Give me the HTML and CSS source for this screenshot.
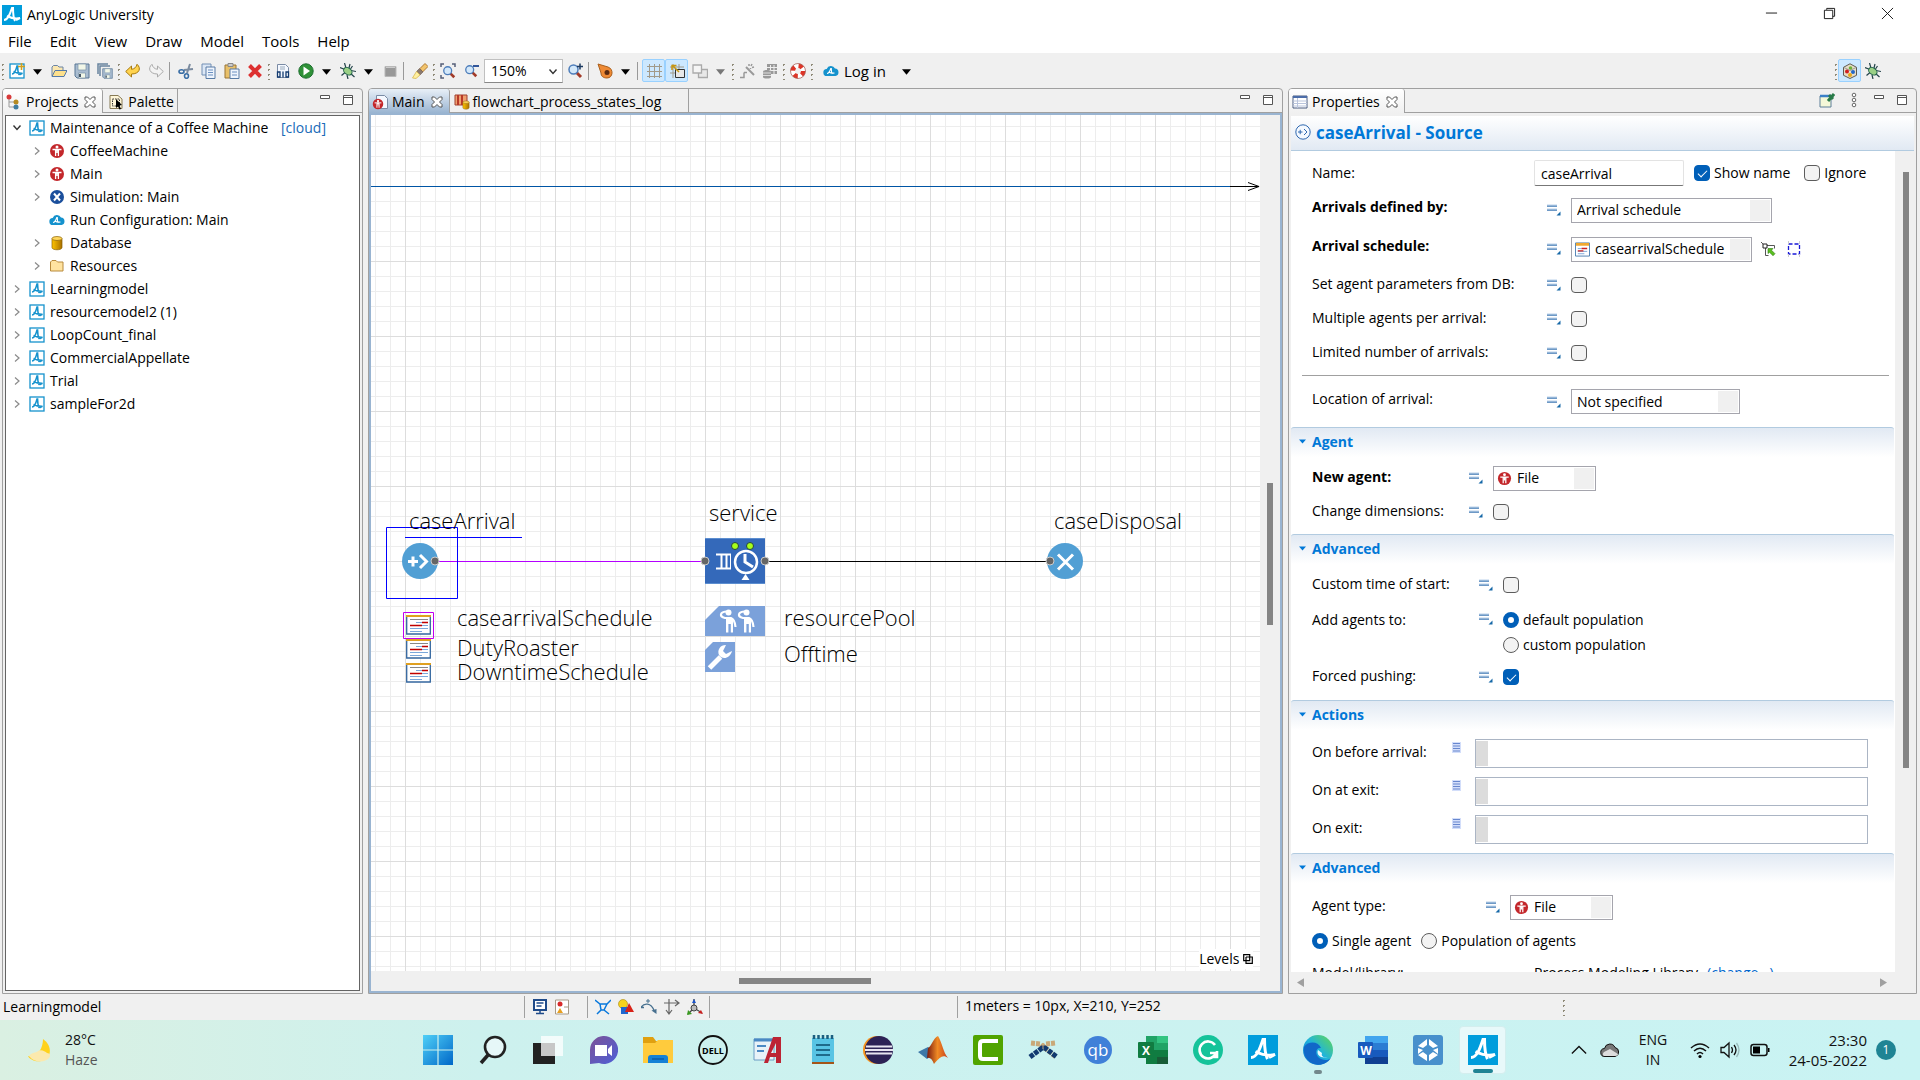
FILE: index.html
```html
<!DOCTYPE html>
<html lang="en">
<head>
  <meta charset="UTF-8">
  <meta name="viewport" content="width=device-width, initial-scale=1.0">
  <title>AnyLogic University</title>
  <link rel="stylesheet" href="styles.css">
</head>
<body>
  <!-- shared icons -->
  <svg class="defs" aria-hidden="true">
    <defs>
      <linearGradient id="gWin" x1="0" y1="0" x2="1" y2="1"><stop offset="0" stop-color="#4fd0f7"/><stop offset="1" stop-color="#0067c8"/></linearGradient>
      <linearGradient id="gEdge" x1="0" y1="1" x2="1" y2="0"><stop offset="0" stop-color="#0a6cd0"/><stop offset=".5" stop-color="#1fb4dc"/><stop offset="1" stop-color="#64d850"/></linearGradient>
      <linearGradient id="gChat" x1="0" y1="0" x2="1" y2="1"><stop offset="0" stop-color="#7d5296"/><stop offset="1" stop-color="#4d5fd8"/></linearGradient>
      <linearGradient id="gGold" x1="0" x2="1"><stop offset="0" stop-color="#ffc400"/><stop offset="1" stop-color="#a87000"/></linearGradient>
      <linearGradient id="gMat" x1="0" x2="1"><stop offset="0" stop-color="#7a1a10"/><stop offset=".5" stop-color="#f08a24"/><stop offset="1" stop-color="#c8401c"/></linearGradient>
    </defs>
    <symbol id="logo" viewBox="0 0 20 20"><rect width="20" height="20" fill="#009ddc"/><path d="M2 15c4 0 6-6 8-12l1 0c0 5 0 9 2 13M5 11c4 2 9 3 13 2l-4 2" fill="none" stroke="#fff" stroke-width="2"/></symbol>
    <symbol id="model" viewBox="0 0 16 16"><rect x="1" y="1" width="14" height="14" fill="#fff" stroke="#1592cd" stroke-width="1.3"/><path d="M3 11c3 0 4-4 5-8h.6c0 4 0 6 1.600 9M4.500 8.500c3 1.500 5 2 9 1.800l-3 1.500" fill="none" stroke="#1592cd" stroke-width="1.500"/></symbol>
    <symbol id="agent" viewBox="0 0 16 16"><circle cx="8" cy="8" r="7" fill="#c3272b"/><circle cx="8" cy="4" r="1.500" fill="#fff"/><path d="M3.500 6.500h9M8 6v4M6.600 13V7h2.800v6M8 10" stroke="#fff" stroke-width="1.300" fill="none"/></symbol>
    <symbol id="sim" viewBox="0 0 16 16"><circle cx="8" cy="8" r="7" fill="#1b4f9c"/><path d="M5 4.500l6 7M11 4.500l-6 7" stroke="#fff" stroke-width="2"/></symbol>
    <symbol id="cloud" viewBox="0 0 16 16"><path d="M4 13a3.500 3.500 0 0 1-.3-7A4.500 4.500 0 0 1 12 5.500a3.800 3.800 0 0 1 .5 7.500z" fill="#1592cd"/><path d="M4 10.500c2 0 3-2.500 3.800-5l.5 0c0 2.500 0 4 1 5.500M5.500 9c2 1 4 1.300 6 1" fill="none" stroke="#fff" stroke-width="1.100"/></symbol>
    <symbol id="db" viewBox="0 0 16 16"><path d="M3 3.500v9c0 3 10 3 10 0v-9z" fill="url(#gGold)" stroke="#8a6000" stroke-width=".7"/><ellipse cx="8" cy="3.500" rx="5" ry="2" fill="#ffd75e" stroke="#8a6000" stroke-width=".7"/></symbol>
    <symbol id="folder" viewBox="0 0 16 16"><path d="M1.500 13V4l1.500-1.500h4L8.500 4H14v9z" fill="#ffe3a0" stroke="#b88a3c"/></symbol>
    <symbol id="sched" viewBox="0 0 25 20"><path d="M.7 1h23.600v18H.7z" fill="#fff" stroke="#33669f" stroke-width="1.300"/><path d="M0 1h25" stroke="#e0a020" stroke-width="2"/><path d="M4 4.500h18" stroke="#888"/><path d="M10 7.500h6M4 13.500h18M4 16.500h12M16 10.500h6" stroke="#7ba7da"/><path d="M16 7.500h6M4 10.500h12" stroke="#c00000" stroke-width="1.300"/></symbol>
    <symbol id="eq" viewBox="0 0 14 12"><path d="M0 2h10M0 6h10" stroke="#3f78b4" stroke-width="1.300"/><path d="M0 1h10M0 5h10" stroke="#bcd3ea"/><path d="M13.500 7.500v4h-4z" fill="#1769a8"/></symbol>
    <symbol id="code" viewBox="0 0 9 11"><path d="M0 0h9v11H0z" fill="#d3defa"/><path d="M1 1.500h7M1 4h7M1 6.500h7M1 9h7" stroke="#6887ce"/></symbol>
    <symbol id="close" viewBox="0 0 12 12"><path d="M1 1h2.500L6 3.500 8.500 1H11v2.500L8.500 6 11 8.500V11H8.500L6 8.500 3.500 11H1V8.500L3.500 6 1 3.500z" fill="#fff" stroke="#555"/></symbol>
    <symbol id="min" viewBox="0 0 12 12"><path d="M1.500 1.500h9v3h-9z" fill="#fff" stroke="#555"/></symbol>
    <symbol id="max" viewBox="0 0 12 12"><path d="M1.500 1.500h9v9h-9zM1.500 3.500h9" fill="#fff" stroke="#555"/></symbol>
    <symbol id="right" viewBox="0 0 8 10"><path d="M2 1.500L6 5 2 8.500" fill="none" stroke="#8a8a8a" stroke-width="1.200"/></symbol>
    <symbol id="down" viewBox="0 0 10 8"><path d="M1.500 1.500L5 5.500l3.500-4" fill="none" stroke="#333" stroke-width="1.400"/></symbol>
    <symbol id="tri" viewBox="0 0 10 6"><path d="M0 0h10L5 6z"/></symbol>
    <symbol id="bug" viewBox="0 0 16 16"><path d="M0 4.500l5 2M4.500 0l1.500 5M10 1l-1 4M16 8.500l-5-1M14.500 14L10 10M8 16l-1-4M1.500 12.500L5 9.500M12.500 3L10.500 6" stroke="#24434a" stroke-width="1.200"/><ellipse cx="8" cy="8.300" rx="4.600" ry="3.200" transform="rotate(35 8 8)" fill="#9ad086" stroke="#20604a"/></symbol>
    <symbol id="lens" viewBox="0 0 16 16"><path d="M9.500 9.500l4.500 4.500" stroke="#a23a28" stroke-width="3"/><circle cx="6.500" cy="6.500" r="4.500" fill="#d3e8fa" stroke="#4d7dba" stroke-width="1.500"/></symbol>
    <symbol id="disk" viewBox="0 0 16 16"><path d="M1 1h14v14H3l-2-2z" fill="#a9bcd0" stroke="#587694"/><path d="M4 1h8v6H4zM4.500 10h7v5h-7z" fill="#f2f7e8" stroke="#7890a8" stroke-width=".7"/><path d="M6 11v3" stroke="#456" stroke-width="2"/></symbol>
    <symbol id="page" viewBox="0 0 16 16"><path d="M2.500 1.500h8l3 3v10h-11z" fill="#f4f8ff" stroke="#7a8ba5"/></symbol>
  </svg>

  <header class="titlebar">
    <svg class="app-icon"><use href="#logo"/></svg>
    <h1>AnyLogic University</h1>
    <div class="window-buttons">
      <button aria-label="Minimize"><svg viewBox="0 0 14 14"><path d="M1 6.500h12"/></svg></button>
      <button aria-label="Restore"><svg viewBox="0 0 14 14"><path d="M1.500 3.500h9v9h-9zM4 3V1.500h8.500V10h-2"/></svg></button>
      <button aria-label="Close"><svg viewBox="0 0 14 14"><path d="M1 1l12 12M13 1L1 13"/></svg></button>
    </div>
  </header>
  <nav class="menubar">
    <button>File</button><button>Edit</button><button>View</button><button>Draw</button><button>Model</button><button>Tools</button><button>Help</button>
  </nav>

  <div class="toolbar">
    <span class="grip"></span>
    <button class="tool" aria-label="New"><svg><use href="#model"/><path d="M12.500 0v7M9 3.500h7" stroke="#d0a020" stroke-width="1.600"/></svg></button>
    <button class="drop" aria-label="New menu"><svg><use href="#tri"/></svg></button>
    <button class="tool" aria-label="Open"><svg viewBox="0 0 16 16"><path d="M1 13V4l1.500-1.500h4L8 4h4v3" fill="#fbe7b0" stroke="#6b84a5"/><path d="M1 13.500l3-6h12l-3 6z" fill="#fde08c" stroke="#557aa8"/></svg></button>
    <button class="tool" aria-label="Save"><svg><use href="#disk"/></svg></button>
    <button class="tool" aria-label="Save all"><svg viewBox="0 0 16 16"><path d="M1 11V1h10M3 13V3h10" fill="none" stroke="#68849f" stroke-width="1.500"/><use href="#disk" x="5" y="5" width="11" height="11"/></svg></button>
    <span class="grip"></span>
    <button class="tool" aria-label="Undo"><svg viewBox="0 0 16 16"><path d="M.7 8.500L6.500 3v3.300C9.500 6 11.500 4 12 1.300 16.500 5 14.500 11 6.500 11v3z" fill="#ffd34e" stroke="#a77a10"/></svg></button>
    <button class="tool" aria-label="Redo"><svg viewBox="0 0 16 16"><path d="M15.300 8.500L9.500 3v3.300C6.500 6 4.500 4 4 1.300-.5 5 1.500 11 9.500 11v3z" fill="#f3f3f3" stroke="#aaa"/></svg></button>
    <span class="sep"></span>
    <button class="tool" aria-label="Cut"><svg viewBox="0 0 16 16"><path d="M9 10L12 1M6 7l9-1" stroke="#7c8ca0" stroke-width="2"/><ellipse cx="3.500" cy="8.500" rx="2.500" ry="1.800" fill="none" stroke="#3a6ea5" stroke-width="1.600"/><ellipse cx="8.500" cy="13" rx="2" ry="2.300" fill="none" stroke="#3a6ea5" stroke-width="1.600"/></svg></button>
    <button class="tool" aria-label="Copy"><svg viewBox="0 0 16 16"><path d="M1 1h9v11H1z" fill="#dce7f5" stroke="#7290b5"/><path d="M5 4h9v11.500H5z" fill="#eef4fc" stroke="#587ba5"/><path d="M7 7h5M7 9.500h5M7 12h5" stroke="#6a8fc0"/></svg></button>
    <button class="tool" aria-label="Paste"><svg viewBox="0 0 16 16"><path d="M1 2h11v13H1z" fill="#e8c06a" stroke="#9a7434"/><path d="M4 .5h5v3H4z" fill="#ccc" stroke="#888"/><path d="M6 6h9v9.500H6z" fill="#eef4fc" stroke="#587ba5"/><path d="M8 9h5M8 12h5" stroke="#6a8fc0"/></svg></button>
    <button class="tool" aria-label="Delete"><svg viewBox="0 0 16 16"><path d="M2.500 2.500l11 11M13.500 2.500l-11 11" stroke="#dd3030" stroke-width="4"/></svg></button>
    <span class="grip"></span>
    <button class="tool" aria-label="Build"><svg viewBox="0 0 16 16"><use href="#page"/><path d="M5 4h5M5 6h5" stroke="#9ab"/><path d="M2.500 9h2.500v5H2.500zM8 8.500v6M11 9h2.500v5H11z" fill="#fff" stroke="#123a70" stroke-width="1.300"/></svg></button>
    <button class="tool" aria-label="Run"><svg viewBox="0 0 16 16"><circle cx="8" cy="8" r="7.200" fill="#2f9137" stroke="#1d6f30"/><path d="M5.500 3.500l6.500 4.500-6.500 4.500z" fill="#fff"/></svg></button>
    <button class="drop" aria-label="Run menu"><svg><use href="#tri"/></svg></button>
    <button class="tool" aria-label="Debug"><svg><use href="#bug"/></svg></button>
    <button class="drop" aria-label="Debug menu"><svg><use href="#tri"/></svg></button>
    <button class="tool" aria-label="Stop"><svg viewBox="0 0 16 16"><path d="M3 3.500h11v10H3z" fill="#999" stroke="#b8b8b8"/><path d="M4 4.500h9" stroke="#ccc"/></svg></button>
    <span class="sep"></span>
    <button class="tool" aria-label="Search"><svg viewBox="0 0 16 16"><path d="M8 5.500L13 .5 16 3.500 10.500 9z" fill="#f2c46c" stroke="#b07830"/><path d="M7.500 5.500l3.500 3.500L8 12 4.500 8.500z" fill="#8b7a70" stroke="#6b5a50" stroke-width=".6"/><path d="M4.500 8.500L8 12l-4 3.500L.5 15z" fill="#fff0a0" stroke="#d8b850" stroke-width=".8"/></svg></button>
    <span class="grip"></span>
    <button class="tool" aria-label="Zoom to fit"><svg viewBox="0 0 16 16"><path d="M1 4V1h3M12 1h3v3M1 12v3h3" fill="none" stroke="#555f78" stroke-width="1.500"/><use href="#lens" x="2" y="2" width="14" height="14"/></svg></button>
    <button class="tool" aria-label="Zoom out"><svg viewBox="0 0 16 16"><use href="#lens" x="1" y="1" width="14" height="14"/><path d="M10 3h6" stroke="#1c4590" stroke-width="1.800"/></svg></button>
    <span class="zoom-box">
      <select aria-label="Zoom"><option>150%</option></select>
      <svg class="chevron"><use href="#down"/></svg>
    </span>
    <button class="tool" aria-label="Zoom in"><svg viewBox="0 0 16 16"><use href="#lens"/><path d="M10 3.500h6M13 .5v6" stroke="#1c3a60" stroke-width="1.500"/></svg></button>
    <span class="sep"></span>
    <button class="tool" aria-label="Camera"><svg viewBox="0 0 16 16"><path d="M1 1l10 3c6 2 5 11-1 11-4 0-6-2-6-5z" fill="#ef8a35" stroke="#a9601e"/><circle cx="10" cy="9.500" r="2.500" fill="#5a2a10"/></svg></button>
    <button class="drop" aria-label="Camera menu"><svg><use href="#tri"/></svg></button>
    <span class="sep"></span>
    <button class="tool on" aria-label="Grid"><svg viewBox="0 0 16 16"><path d="M3.500 1v14M8.500 1v14M13.500 1v14M1 3.500h15M1 8.500h15M1 13.500h15" stroke="#a19a8a"/></svg></button>
    <button class="tool on" aria-label="Snap to grid"><svg viewBox="0 0 16 16"><path d="M4 1v14M1 4h14M10 1v5M1 10h5" stroke="#a19a8a"/><path d="M6.500 6.500h9v8h-9z" fill="#e8e8e8" stroke="#333"/><path d="M10 9L4 3m-1 4V2.500h4.500" fill="none" stroke="#c79610" stroke-width="1.500"/></svg></button>
    <button class="tool" aria-label="Bring to front"><svg viewBox="0 0 16 16"><path d="M6.500 6.500h9v8h-9z" fill="#e8e8e8" stroke="#aaa" stroke-width="1.300"/><path d="M1 2h8.500v8H1z" fill="#f5f5f5" stroke="#aaa" stroke-width="1.300"/></svg></button>
    <button class="drop grey" aria-label="Order menu"><svg><use href="#tri"/></svg></button>
    <span class="grip"></span>
    <button class="tool" aria-label="Wizard"><svg viewBox="0 0 16 16"><path d="M7 4l8 8" stroke="#999" stroke-width="2"/><path d="M1 14.500h4V9.500M5 9.500h3M10 1v2M13 1l-1 2M15 4l-2 .5M11.500 5v1" fill="none" stroke="#999" stroke-width="1.500"/></svg></button>
    <button class="tool" aria-label="Database"><svg viewBox="0 0 16 16"><path d="M5 1h10v10H5z" fill="#999"/><path d="M5 4.500h10M5 7.500h10M8.500 2v9M12 2v9" stroke="#eee"/><path d="M1 8.500c0-2 8-2 8 0V14c0 2-8 2-8 0z" fill="#999"/><path d="M1 10h8M1 12.500h8" stroke="#ddd"/></svg></button>
    <span class="grip"></span>
    <button class="tool" aria-label="Help"><svg viewBox="0 0 16 16"><circle cx="8" cy="8" r="5.200" fill="none" stroke="#fff" stroke-width="4.500"/><circle cx="8" cy="8" r="5.200" fill="none" stroke="#dd3528" stroke-width="4.500" stroke-dasharray="4.100 4.060"/><circle cx="8" cy="8" r="7.500" fill="none" stroke="#a05048" stroke-width=".7"/></svg></button>
    <span class="grip"></span>
    <button class="login"><svg><use href="#cloud"/></svg>Log in</button>
    <button class="drop" aria-label="Account menu"><svg><use href="#tri"/></svg></button>
    <div class="perspectives">
      <span class="grip"></span>
      <button class="tool on" aria-label="AnyLogic perspective"><svg viewBox="0 0 16 16"><path d="M8 .8l6.500 3.500v8L8 15.500l-6.500-3.200v-8z" fill="#e6ddc8" stroke="#5f5a50"/><path d="M2 4.500l6 3 6-3" stroke="#999" fill="none"/><circle cx="5" cy="8.500" r="2" fill="#d02020"/><circle cx="11" cy="9" r="2" fill="#2468c8"/><circle cx="8" cy="12" r="2" fill="#e8a818"/><circle cx="8.500" cy="5" r="1.800" fill="#70b038"/></svg></button>
      <button class="tool" aria-label="Debug perspective"><svg><use href="#bug"/></svg></button>
    </div>
  </div>

  <main class="workbench">
    <section class="pane projects">
      <div class="tabs">
        <button class="tab active"><svg viewBox="0 0 16 16"><path d="M3 4v9h5M3 8h5" fill="none" stroke="#999"/><circle cx="3" cy="3" r="2.500" fill="#d83a3a"/><circle cx="10" cy="8" r="2.500" fill="#b58a20"/><circle cx="10" cy="13" r="2.500" fill="#3f7ca0"/></svg>Projects<svg class="x"><use href="#close"/></svg></button>
        <button class="tab"><svg viewBox="0 0 16 16"><path d="M2 1.500h8l4 3.500v9.500H2z" fill="#fff6d8" stroke="#877a55"/><path d="M4.500 5h7v7h-7z" fill="none" stroke="#333" stroke-dasharray="1.500 1"/><path d="M8 5l6 6-2.500.5L13 15l-1.500.5L10 12.500 8 14z"/></svg>Palette</button>
        <div class="pane-tools"><button aria-label="Minimize"><svg><use href="#min"/></svg></button><button aria-label="Maximize"><svg><use href="#max"/></svg></button></div>
      </div>
      <div class="tree-box">
        <ul class="tree">
          <li><div class="node"><svg class="tw open"><use href="#down"/></svg><svg><use href="#model"/></svg>Maintenance of a Coffee Machine <span class="cloud">[cloud]</span></div>
            <ul>
              <li><div class="node"><svg class="tw"><use href="#right"/></svg><svg><use href="#agent"/></svg>CoffeeMachine</div></li>
              <li><div class="node"><svg class="tw"><use href="#right"/></svg><svg><use href="#agent"/></svg>Main</div></li>
              <li><div class="node"><svg class="tw"><use href="#right"/></svg><svg><use href="#sim"/></svg>Simulation: Main</div></li>
              <li><div class="node"><svg class="tw"></svg><svg><use href="#cloud"/></svg>Run Configuration: Main</div></li>
              <li><div class="node"><svg class="tw"><use href="#right"/></svg><svg><use href="#db"/></svg>Database</div></li>
              <li><div class="node"><svg class="tw"><use href="#right"/></svg><svg><use href="#folder"/></svg>Resources</div></li>
            </ul>
          </li>
          <li><div class="node"><svg class="tw"><use href="#right"/></svg><svg><use href="#model"/></svg>Learningmodel</div></li>
          <li><div class="node"><svg class="tw"><use href="#right"/></svg><svg><use href="#model"/></svg>resourcemodel2 (1)</div></li>
          <li><div class="node"><svg class="tw"><use href="#right"/></svg><svg><use href="#model"/></svg>LoopCount_final</div></li>
          <li><div class="node"><svg class="tw"><use href="#right"/></svg><svg><use href="#model"/></svg>CommercialAppellate</div></li>
          <li><div class="node"><svg class="tw"><use href="#right"/></svg><svg><use href="#model"/></svg>Trial</div></li>
          <li><div class="node"><svg class="tw"><use href="#right"/></svg><svg><use href="#model"/></svg>sampleFor2d</div></li>
        </ul>
      </div>
    </section>

    <section class="pane editor">
      <div class="tabs">
        <button class="tab active"><svg viewBox="0 0 16 16"><use href="#page" x="2"/><use href="#agent" y="4" width="12" height="12"/></svg>Main<svg class="x"><use href="#close"/></svg></button>
        <button class="tab log-tab"><svg viewBox="0 0 16 16"><path d="M1 1h12v10H1z" fill="#f0a070" stroke="#a04030"/><path d="M4 1v10M8 1v10" stroke="#b83a28" stroke-width="2"/><use href="#db" x="7" y="6" width="10" height="10"/></svg>flowchart_process_states_log</button>
        <div class="pane-tools"><button aria-label="Minimize"><svg><use href="#min"/></svg></button><button aria-label="Maximize"><svg><use href="#max"/></svg></button></div>
      </div>
      <div class="editor-body">
        <div class="canvas">
          <!-- connectors, ports and block shapes share the canvas coordinates -->
          <svg class="diagram" width="889" height="580" viewBox="371 115 889 580">
            <path d="M371 186.500h860" stroke="#0055a5"/>
            <path d="M1230 186.500h29M1248 182.500l11 4-11 4" fill="none" stroke="#000"/>
            <circle cx="420" cy="561" r="18" fill="#519fd4"/>
            <path d="M408 561.500h10M413 556.500v10" stroke="#fff" stroke-width="3"/><path d="M420 555l6.500 6.500-6.500 6.500" fill="none" stroke="#fff" stroke-width="3"/>
            <path d="M435 561.500h270" stroke="#b400ff"/>
            <path d="M765 561.500h285" stroke="#000"/>
            <path d="M705 538h60v46h-60z" fill="#3469ba"/>
            <path d="M705 538.500h60M705 583.500h60" stroke="#5c8ed0"/>
            <path d="M716 554.500h15M716 568.500h15M721.500 555v13M726.500 555v13" stroke="#fff" stroke-width="2"/><path d="M730.500 554v15" stroke="#fff"/>
            <circle cx="746" cy="562" r="11" fill="none" stroke="#fff" stroke-width="2.500"/><path d="M745 554v8l8 5" fill="none" stroke="#fff" stroke-width="3"/><path d="M745.500 574l4 6h-8z" fill="#fff"/>
            <circle cx="735" cy="546" r="3.500" fill="#a6ff1a" stroke="#244"/><circle cx="750" cy="546" r="3.500" fill="#a6ff1a" stroke="#244"/>
            <circle cx="1065" cy="561" r="18" fill="#519fd4"/><path d="M1058 554.500l15 15M1073 554.500l-15 15" stroke="#fff" stroke-width="3"/>
            <g fill="#666" stroke="#ccc"><circle cx="435" cy="561" r="4"/><circle cx="705" cy="561" r="4"/><circle cx="765" cy="561" r="4"/><circle cx="1050" cy="561" r="4"/></g>
            <path d="M405 537.500h117" stroke="#00f"/><path d="M386.500 527.500h71v71h-71z" fill="none" stroke="#00f"/>
            <use href="#sched" x="406" y="615" width="25" height="20"/><use href="#sched" x="406" y="639" width="25" height="20"/><use href="#sched" x="406" y="663" width="25" height="20"/>
            <path d="M403.500 612.500h30v26h-30z" fill="none" stroke="#c000f0"/>
            <path d="M719 606h46v30h-60v-16z" fill="#7ba1da"/>
            <g id="worker"><circle cx="728.500" cy="612.500" r="3" fill="#fff"/><path d="M726 611.500c-6 .5-7 5-1 6.500h6c3 1 4 4 4.500 9" fill="none" stroke="#fff" stroke-width="2.200"/><path d="M726 618h7v14.500h-2.200V624h-2.400v8.500H726z" fill="#fff"/></g>
            <use href="#worker" x="18"/>
            <path d="M713 642h22v30h-30v-22z" fill="#7ba1da"/><path d="M709.500 668l11-11" stroke="#fff" stroke-width="5"/><path d="M726 645c-6 0-9 5-7 10 3 5 11 4 13-4l-6 3-3-3z" fill="#fff"/>
          </svg>
          <span class="label l-arrival">caseArrival</span>
          <span class="label l-service">service</span>
          <span class="label l-disposal">caseDisposal</span>
          <span class="label l-schedule">casearrivalSchedule</span>
          <span class="label l-duty">DutyRoaster</span>
          <span class="label l-downtime">DowntimeSchedule</span>
          <span class="label l-pool">resourcePool</span>
          <span class="label l-offtime">Offtime</span>
          <button class="levels">Levels <svg viewBox="0 0 10 10"><path d="M3 3V9.300h6.300V3H3M.7.7h6v6h-6z" fill="none" stroke="#000" stroke-width="1.200"/></svg></button>
        </div>
        <div class="vscroll"><span></span></div>
        <div class="hscroll"><span></span></div>
      </div>
    </section>

    <section class="pane properties">
      <div class="tabs">
        <button class="tab active"><svg viewBox="0 0 16 16"><path d="M1 2h14v12H1z" fill="#fff" stroke="#4b5c80"/><path d="M1 3h14" stroke="#4b6ca8" stroke-width="2"/><path d="M5.500 4v10M1 7h14M1 9.500h14M1 12h14" stroke="#b9c4dc"/></svg>Properties<svg class="x"><use href="#close"/></svg></button>
        <div class="pane-tools">
          <button aria-label="Pin"><svg class="wide" viewBox="0 0 16 16"><path d="M1 4h11v11H1z" fill="#f4f8d8" stroke="#5c7f98"/><path d="M1 4h11" stroke="#3b80c8" stroke-width="2.500"/><path d="M9 9l6-7M10 3l4 4" stroke="#287a48" stroke-width="3"/></svg></button>
          <button aria-label="View menu"><svg class="wide" viewBox="0 0 16 16"><g fill="#fff" stroke="#666"><circle cx="8" cy="3" r="1.800"/><circle cx="8" cy="8" r="1.800"/><circle cx="8" cy="13" r="1.800"/></g></svg></button>
          <button aria-label="Minimize"><svg><use href="#min"/></svg></button><button aria-label="Maximize"><svg><use href="#max"/></svg></button>
        </div>
      </div>
      <h2 class="prop-title"><svg viewBox="0 0 16 16"><circle cx="8" cy="8" r="7.200" fill="#f4f9ff" stroke="#2f68b0"/><path d="M3 8h4.500M5.200 5.800v4.400M9 5l3 3-3 3" fill="none" stroke="#2f68b0"/></svg>caseArrival - Source</h2>
      <div class="prop-body">
        <form class="form">
          <div class="rows main-rows">
            <div class="row name-row"><label for="name">Name:</label><input type="text" id="name" value="caseArrival">
              <label class="check"><input type="checkbox" checked>Show name</label><label class="check ignore"><input type="checkbox">Ignore</label></div>
            <div class="row tall"><label class="strong" for="defined">Arrivals defined by:</label><svg class="eq"><use href="#eq"/></svg><select id="defined" class="w-type"><option>Arrival schedule</option></select></div>
            <div class="row mid"><label class="strong" for="schedule">Arrival schedule:</label><svg class="eq"><use href="#eq"/></svg>
              <span class="icon-select w-schedule"><svg viewBox="0 0 16 16"><path d="M.5 1h15v14H.5z" fill="#fff" stroke="#4a7db0"/><path d="M1 2.500h14" stroke="#f0a830" stroke-width="3"/><path d="M3 7h4M3 10h10M3 12.500h7" stroke="#7ba7da"/><path d="M7 7h6M3 9.500h6" stroke="#c22" stroke-width="1.500"/></svg><select id="schedule"><option>casearrivalSchedule</option></select></span>
              <button type="button" class="mini" aria-label="Go to element"><svg viewBox="0 0 16 16"><path d="M1 1l3 3M4.500 4.500h10v3M5.500 5v9.500h3" stroke="#555" fill="none"/><path d="M3 3h4v4H3z" fill="#fff" stroke="#222"/><path d="M8 7.500h5l-1.500 1.700 3.500 3.500-2 2-3.500-3.500L8 12.500z" fill="#5bbf20" stroke="#2b7a10" stroke-width=".6"/></svg></button>
              <button type="button" class="mini" aria-label="Select on canvas"><svg viewBox="0 0 16 16"><path d="M2.500 3h11v10h-11z" fill="none" stroke="#1818d8" stroke-width="1.300" stroke-dasharray="4 2"/><path d="M2.500 0v3M13.500 0v3M2.500 13v3M13.500 13v3" stroke="#ccc"/></svg></button></div>
            <div class="row"><label for="fromdb">Set agent parameters from DB:</label><svg class="eq"><use href="#eq"/></svg><input type="checkbox" id="fromdb"></div>
            <div class="row"><label for="multi">Multiple agents per arrival:</label><svg class="eq"><use href="#eq"/></svg><input type="checkbox" id="multi"></div>
            <div class="row"><label for="limited">Limited number of arrivals:</label><svg class="eq"><use href="#eq"/></svg><input type="checkbox" id="limited"></div>
            <hr>
            <div class="row location"><label for="location">Location of arrival:</label><svg class="eq"><use href="#eq"/></svg><select id="location" class="w-location"><option>Not specified</option></select></div>
          </div>

          <h3><svg><use href="#tri"/></svg>Agent</h3>
          <div class="rows agent-rows">
            <div class="row"><label class="strong" for="agent">New agent:</label><svg class="eq"><use href="#eq"/></svg><span class="icon-select w-agent"><svg><use href="#agent"/></svg><select id="agent"><option>File</option></select></span></div>
            <div class="row"><label for="dims">Change dimensions:</label><svg class="eq"><use href="#eq"/></svg><input type="checkbox" id="dims"></div>
          </div>

          <h3><svg><use href="#tri"/></svg>Advanced</h3>
          <div class="rows adv-rows">
            <div class="row"><label for="custom">Custom time of start:</label><svg class="eq"><use href="#eq"/></svg><input type="checkbox" id="custom"></div>
            <div class="row radios"><span class="caption">Add agents to:</span><svg class="eq"><use href="#eq"/></svg>
              <div><label class="check"><input type="radio" name="pop" checked>default population</label><label class="check"><input type="radio" name="pop">custom population</label></div></div>
            <div class="row"><label for="push">Forced pushing:</label><svg class="eq"><use href="#eq"/></svg><input type="checkbox" id="push" checked></div>
          </div>

          <h3><svg><use href="#tri"/></svg>Actions</h3>
          <div class="rows action-rows">
            <div class="row mid"><label for="before">On before arrival:</label><svg class="code"><use href="#code"/></svg><textarea id="before" rows="1"></textarea></div>
            <div class="row mid"><label for="atexit">On at exit:</label><svg class="code"><use href="#code"/></svg><textarea id="atexit" rows="1"></textarea></div>
            <div class="row mid"><label for="onexit">On exit:</label><svg class="code"><use href="#code"/></svg><textarea id="onexit" rows="1"></textarea></div>
          </div>

          <h3><svg><use href="#tri"/></svg>Advanced</h3>
          <div class="rows type-rows">
            <div class="row mid"><label for="type">Agent type:</label><svg class="eq"><use href="#eq"/></svg><span class="icon-select w-agent"><svg><use href="#agent"/></svg><select id="type"><option>File</option></select></span></div>
            <div class="row single"><label class="check"><input type="radio" name="kind" checked>Single agent</label><label class="check"><input type="radio" name="kind">Population of agents</label></div>
            <div class="row library"><span class="caption">Model/library:</span><span>Process Modeling Library</span><a href="#change">(change...)</a></div>
          </div>
        </form>
        <div class="vscroll"><span></span></div>
        <div class="hscroll arrows"><svg viewBox="0 0 8 10"><path d="M8 0v10L0 5z"/></svg><svg viewBox="0 0 8 10"><path d="M0 0v10l8-5z"/></svg></div>
      </div>
    </section>
  </main>

  <div class="statusbar">
    <span class="status-text">Learningmodel</span>
    <div class="status-group view-tools">
      <svg viewBox="0 0 16 16"><path d="M2 1h12v10H2z" fill="#fff" stroke="#1f4b8a" stroke-width="2"/><path d="M4.500 4h7M4.500 7h5M4 14.500h8M8 11v4" stroke="#1f4b8a" stroke-width="1.500"/></svg>
      <svg viewBox="0 0 16 16"><path d="M1.500 1h13v14h-13z" fill="#fff" stroke="#a59a88"/><circle cx="6" cy="5" r="2.500" fill="#d82a2a"/><path d="M6 9l3 5H3z" fill="#e8a020"/><path d="M10 8h4" stroke="#a59a88"/></svg>
    </div>
    <div class="status-group shape-tools">
      <svg viewBox="0 0 16 16"><path d="M0 1l5 4h7l4-4M5 5l1 6-4 4M12 5l-3 6H6M9 11l5 4" fill="none" stroke="#0878dc" stroke-width="1.500"/></svg>
      <svg viewBox="0 0 16 16"><circle cx="5" cy="5" r="4.500" fill="#f7d31c" stroke="#a8860a" stroke-width=".6"/><path d="M3 8h7v7H3z" fill="#1f67d0"/><path d="M11 4l5 9H7z" fill="#d82218"/></svg>
      <svg viewBox="0 0 16 16"><path d="M0 8.500c3-5 10-5 13 3M0 8.500h3" fill="none" stroke="#47708f" stroke-width="1.300"/><path d="M10.500 11.500l5-1.500v5z" fill="#47708f"/><path d="M5 2h4M7 0v4" stroke="#47708f"/></svg>
      <svg viewBox="0 0 16 16"><path d="M0 4h14M11 1l4 3-4 3M5 0v14M2 11l3 4 3-4" fill="none" stroke="#666" stroke-width="1.200"/></svg>
      <svg viewBox="0 0 16 16"><path d="M7 0v9l8 5M7 9l-6 6" stroke="#444" fill="none" stroke-width="1.300"/><circle cx="7" cy="9" r="3" fill="#bbb" stroke="#444"/><path d="M5 4l2-4 2 4z" fill="#1b53c8"/><path d="M11 14l5 1-2-4z" fill="#c81f1f"/><path d="M1 11l-1 5 5-1z" fill="#3a9a20"/></svg>
    </div>
    <span class="coords">1meters = 10px, X=210, Y=252</span>
    <span class="grip"></span>
  </div>

  <footer class="taskbar">
    <div class="weather">
      <svg viewBox="0 0 26 30"><path d="M16 2c10 7 9 20-2 22C9 25 3 23 1 19c9 2 15-7 15-17z" fill="#ffd21c"/><path d="M2 19c3-4 7-3 9-5 3-2 7 0 9 2 3 0 4 3 2 5-4 5-15 5-20-2z" fill="#fbe9ae"/></svg>
      <div>28°C<br><span>Haze</span></div>
    </div>
    <div class="apps">
      <button aria-label="Start"><svg viewBox="0 0 30 30"><path d="M0 0h14.400v14.400H0zM15.600 0H30v14.400H15.600zM0 15.600h14.400V30H0zM15.600 15.600H30V30H15.600z" fill="url(#gWin)"/></svg></button>
      <button aria-label="Search"><svg viewBox="0 0 30 30"><circle cx="17" cy="12" r="10" fill="#e6f7f8" stroke="#222" stroke-width="2.600"/><path d="M10 20l-7 8" stroke="#222" stroke-width="3.500"/></svg></button>
      <button aria-label="Task view"><svg viewBox="0 0 30 30"><path d="M0 8h22v21H0z" fill="#222"/><path d="M8 1h22v20H8z" fill="#fff" opacity=".75"/></svg></button>
      <button aria-label="Chat"><svg viewBox="0 0 30 30"><path d="M15 1a14 14 0 1 1-4 27l-9 1V15A14 14 0 0 1 15 1z" fill="url(#gChat)"/><path d="M7 10h12v11H7zM20 14l4-4v11l-4-3z" fill="#fff"/></svg></button>
      <button aria-label="Explorer"><svg viewBox="0 0 30 30"><path d="M0 2h10l3 4h17v8H0z" fill="#e0a010"/><path d="M0 8h12l3-3h15v23H0z" fill="#ffcb3d"/><path d="M5 28v-5q0-3 3-3h14q3 0 3 3v5z" fill="#1581d6"/><path d="M9 24h12" stroke="#0b5ca8" stroke-width="1.500"/></svg></button>
      <button aria-label="Dell"><svg viewBox="0 0 30 30"><circle cx="15" cy="15" r="14" fill="none" stroke="#111" stroke-width="1.800"/><text x="15" y="19" text-anchor="middle" class="dell">DELL</text></svg></button>
      <button aria-label="Access"><svg viewBox="0 0 30 30"><path d="M1 4h20v21H1z" fill="#e8f2f8" stroke="#6b9cc4"/><path d="M1 5h20" stroke="#4989c4" stroke-width="3"/><path d="M4 11h9M4 16h7" stroke="#4989c4" stroke-width="2"/><path d="M11 28l9-26h8v26h-5v-6h-6l-2 6zM18 18h5V8z" fill="#bc2434" fill-rule="evenodd"/></svg></button>
      <button aria-label="Notepad"><svg viewBox="0 0 30 30"><path d="M4 3h22v24H4z" fill="#58c4e4"/><path d="M4 27h22v2H4z" fill="#a45518"/><path d="M8 10h14M8 15h14M8 20h14" stroke="#0b4c6c" stroke-width="1.500"/><path d="M6 0v4M10.500 0v4M15 0v4M19.500 0v4M24 0v4" stroke="#1b5f80" stroke-width="2.500"/></svg></button>
      <button aria-label="Eclipse"><svg viewBox="0 0 30 30"><circle cx="14" cy="15" r="14" fill="#f7941e"/><circle cx="16" cy="15" r="14" fill="#2c2255"/><path d="M3 11.500h26M2 15h28M3 18.500h26" stroke="#e8e5f0" stroke-width="1.800"/></svg></button>
      <button aria-label="Matlab"><svg viewBox="0 0 30 30"><path d="M0 17l10-5 7 6-8 6z" fill="#3d78a8"/><path d="M10 13c4-2 5-10 10-12 4 6 5 16 10 22-5-4-8-1-14 6-2-5-4-7-7-6z" fill="url(#gMat)"/></svg></button>
      <button aria-label="Camtasia"><svg viewBox="0 0 30 30"><rect width="30" height="30" rx="2" fill="#51a400"/><path d="M25 6H10q-3 0-3 3v12q0 3 3 3h15" fill="none" stroke="#fff" stroke-width="4"/></svg></button>
      <button aria-label="Arena"><svg viewBox="0 0 30 30"><path d="M3 8l9 1 16 13" fill="none" stroke="#c9a878" stroke-width="5" stroke-dasharray="4 1"/><path d="M27 8l-9 1-5 4" fill="none" stroke="#c9a878" stroke-width="5" stroke-dasharray="4 1"/><path d="M2 22l12-9h3l12 9" fill="none" stroke="#123a70" stroke-width="5" stroke-dasharray="4.500 1"/></svg></button>
      <button aria-label="QuickBooks"><svg viewBox="0 0 30 30"><circle cx="15" cy="15" r="14" fill="#4080d8"/><text x="15" y="21" text-anchor="middle" class="qb">qb</text></svg></button>
      <button aria-label="Excel"><svg viewBox="0 0 30 30"><path d="M8 1h22v28H8z" fill="#21a366"/><path d="M8 15h22v14H8z" fill="#107c41"/><path d="M19 1h11v7H19z" fill="#33c481"/><path d="M19 22h11v7H19z" fill="#185c37"/><rect y="7" width="16" height="16" rx="1" fill="#107c41"/><text x="8" y="20" text-anchor="middle" class="office">X</text></svg></button>
      <button aria-label="Grammarly"><svg viewBox="0 0 30 30"><circle cx="15" cy="15" r="15" fill="#15c39a"/><path d="M22 10a8.500 8.500 0 1 0 1 8h-6M19 22h5v-6" fill="none" stroke="#fff" stroke-width="2.600"/></svg></button>
      <button aria-label="AnyLogic"><svg><use href="#logo"/></svg></button>
      <button class="running" aria-label="Edge"><svg viewBox="0 0 30 30"><circle cx="15" cy="15" r="15" fill="url(#gEdge)"/><path d="M1 12c4-6 14-6 17 1-6-1-7 8 0 11 4 2 8 1 10-1-4 6-11 8-17 6C4 26 0 20 1 12z" fill="#1168c8"/><path d="M15 15c-2 5 3 9 10 7-5 1-7-1-6-4z" fill="#e8fbff"/></svg></button>
      <button aria-label="Word"><svg viewBox="0 0 30 30"><path d="M7 1h23v28H7z" fill="#2b7cd3"/><path d="M7 1h23v7H7z" fill="#41a5ee"/><path d="M7 15h23v7H7z" fill="#185abd"/><path d="M7 22h23v7H7z" fill="#103f91"/><rect y="7" width="15" height="16" rx="1" fill="#185abd"/><text x="8" y="20" text-anchor="middle" class="office">W</text></svg></button>
      <button aria-label="Simulator"><svg viewBox="0 0 30 30"><rect width="30" height="30" rx="3" fill="#4890cc"/><path d="M14 4v6l-4 3-5-2zM5 13l5 2-5 4zM5 20l5-3 4 3v6zM16 4v6l4 3 5-2zM25 13l-5 2 5 4zM25 20l-5-3-4 3v6z" fill="#fff"/></svg></button>
      <button class="current" aria-label="AnyLogic University"><svg><use href="#logo"/></svg></button>
    </div>
    <div class="tray">
      <svg viewBox="0 0 18 18"><path d="M1 13l8-8 8 8" fill="none" stroke="#111" stroke-width="1.500"/></svg>
      <svg class="onedrive" viewBox="0 0 20 16"><path d="M5 14.500a4 4 0 0 1-.5-8 5.500 5.500 0 0 1 10.500-1 4.600 4.600 0 0 1 0 9z" fill="#777" stroke="#111"/><path d="M5 14c-2 0-3-2-1-4l6-3 8 5c0 1-1 2-3 2z" fill="#ddd"/></svg>
      <span class="lang">ENG<br>IN</span>
      <svg class="wifi" viewBox="0 0 20 18"><path d="M1 7q9-8 18 0M4 10q6-5.500 12 0M7 13q3-3 6 0" fill="none" stroke="#111" stroke-width="1.500"/><circle cx="10" cy="15.500" r="1.600"/></svg>
      <svg class="sound" viewBox="0 0 20 18"><path d="M1 6.500h3L9 2v14l-5-4.500H1z" fill="none" stroke="#111" stroke-width="1.300"/><path d="M11.500 6q2 3 0 6M14 4q4 5 0 10" fill="none" stroke="#111" stroke-width="1.300"/><path d="M16.500 2q5 7 0 14" fill="none" stroke="#9bb" stroke-width="1.300"/></svg>
      <svg class="battery" viewBox="0 0 20 14"><rect x="1" y="1.500" width="16" height="11" rx="2.500" fill="none" stroke="#111" stroke-width="1.500"/><path d="M3 3.500h7v7H3z"/><path d="M18 5v4h1.500V5z"/></svg>
      <span class="clock">23:30<br>24-05-2022</span>
      <span class="badge">1</span>
    </div>
  </footer>
</body>
</html>
```
FILE: styles.css
```css
* { box-sizing: border-box; }
html, body { height: 100%; }
body { margin: 0; display: flex; flex-direction: column; background: #f0f0f0; color: #000; font: 14px/20px "Open Sans", "Noto Sans", sans-serif; overflow: hidden; }
button, input, select, textarea { font: inherit; color: inherit; margin: 0; }
button { background: none; border: 0; padding: 0; }
h1, h2, h3, ul { margin: 0; padding: 0; font-weight: normal; }
svg { flex: none; width: 16px; height: 16px; }
.defs { position: absolute; width: 0; height: 0; }

/* title and menu */
.titlebar { display: flex; align-items: center; height: 29px; padding: 0 4px 0 2px; background: #fff; flex: none; }
.titlebar h1 { flex: 1; margin-left: 5px; font-size: 14px; }
.app-icon { width: 20px; height: 20px; }
.window-buttons { display: flex; }
.window-buttons button { width: 58px; height: 28px; }
.window-buttons svg { width: 13px; height: 13px; fill: none; stroke: #111; }
.menubar { display: flex; align-items: center; gap: 18px; height: 24px; padding-left: 8px; background: #fff; flex: none; font-size: 15px; }

/* toolbar */
.toolbar { display: flex; align-items: center; height: 35px; flex: none; }
.toolbar > *, .perspectives > * { flex: none; }
.tool { display: flex; align-items: center; justify-content: center; width: 23px; height: 23px; }
.tool.on { background: #cce8ff; border: 1px solid #99d1ff; border-radius: 2px; }
.drop { width: 19px; height: 23px; }
.drop svg { width: 9px; height: 6px; vertical-align: middle; }
.drop.grey { fill: #777; }
.grip { width: 5px; height: 18px; background: radial-gradient(circle, #8f8a78 1px, transparent 1px) 0 0 / 5px 5px; }
.sep { width: 1px; height: 18px; margin: 0 4px 0 2px; background: #999; }
.zoom-box { position: relative; margin-left: 2px; }
.zoom-box select { display: block; width: 79px; height: 24px; padding: 0 6px; appearance: none; background: #fff; border: 1px solid #c0c0c0; border-bottom-color: #888; }
.chevron { position: absolute; right: 5px; top: 9px; width: 10px; height: 8px; }
.login { display: flex; align-items: center; gap: 5px; margin: 0 11px 0 9px; font-size: 15px; }
.perspectives { display: flex; align-items: center; margin-left: auto; padding-right: 36px; }

/* panes */
.workbench { flex: 1; min-height: 0; display: grid; grid-template-columns: 361fr 915fr 629fr; gap: 5px; padding: 0 3px 0 2px; }
.pane { display: flex; flex-direction: column; min-width: 0; min-height: 0; border: 1px solid #a0a0a0; border-radius: 4px 4px 0 0; }
.tabs { display: flex; height: 24px; flex: none; border-bottom: 1px solid #a0a0a0; }
.tab { display: flex; align-items: center; gap: 4px; height: 24px; padding: 2px 3px 0 5px; border-right: 1px solid #a0a0a0; border-bottom: 1px solid #a0a0a0; white-space: nowrap; }
.tab.active { border-bottom: 0; border-radius: 3px 3px 0 0; background: linear-gradient(#fff, #f0f0f0); padding-left: 3px; padding-right: 6px; }
.tab .x { width: 12px; height: 12px; margin-left: 2px; }
.pane-tools { display: flex; gap: 11px; margin-left: auto; padding: 3px 8px 0 0; align-items: flex-start; }
.pane-tools button { display: block; height: 16px; }
.pane-tools svg { display: block; width: 12px; height: 12px; }
.pane-tools .wide { width: 16px; height: 16px; }

.tree-box { flex: 1; margin: 2px 2px 2px; border: 1px solid #646464; background: #fff; overflow: hidden; }
.tree { list-style: none; }
.tree ul { list-style: none; padding-left: 20px; }
.node { display: flex; align-items: center; height: 23px; padding-left: 6px; white-space: pre; }
.node svg { margin-right: 5px; }
.node .tw { width: 8px; height: 10px; margin: 0 8px 0 1px; }
.node .tw.open { width: 10px; height: 8px; margin: 0 7px 0 0; }
.node .cloud { color: #1a6bb8; margin-left: 9px; }

.editor .tab.active { background: linear-gradient(#e8eff7, #99b4d1); }
.log-tab { width: 239px; padding-left: 4px; gap: 3px; }
.editor-body { flex: 1; min-height: 0; display: grid; grid-template: minmax(0, 1fr) 20px / minmax(0, 1fr) 20px; border: 2px solid #99b4d1; }
.canvas { position: relative; overflow: hidden; background:
  linear-gradient(90deg, #ddd 1px, transparent 1px) 34px 0 / 75px 75px,
  linear-gradient(#ddd 1px, transparent 1px) 0 -4px / 75px 75px,
  linear-gradient(90deg, #ededed 1px, transparent 1px) 4px 0 / 15px 15px,
  linear-gradient(#ededed 1px, transparent 1px) 0 11px / 15px 15px, #fff; }
.diagram { position: absolute; left: 0; top: 0; width: 889px; height: 580px; }
.label { position: absolute; font-size: 22px; font-weight: 300; line-height: 24px; white-space: nowrap; }
.l-arrival { left: 38px; top: 393px; }
.l-service { left: 338px; top: 385px; }
.l-disposal { left: 683px; top: 393px; }
.l-schedule { left: 86px; top: 490px; }
.l-duty { left: 86px; top: 520px; }
.l-downtime { left: 86px; top: 544px; }
.l-pool { left: 413px; top: 490px; }
.l-offtime { left: 413px; top: 526px; }
.levels { position: absolute; right: 7px; bottom: 2px; background: #fff; }
.levels svg { width: 10px; height: 10px; }
.vscroll, .hscroll { background: #f0f0f0; }
.vscroll { padding-left: 7px; }
.vscroll span { display: block; width: 6px; background: #858585; }
.editor .vscroll { padding-top: 368px; }
.editor .vscroll span { height: 142px; }
.hscroll span { display: block; width: 132px; height: 6px; margin: 7px 0 0 368px; background: #858585; }

/* properties */
.prop-title { display: flex; align-items: center; gap: 5px; height: 35px; margin: 3px 2px 0; padding: 0 0 0 4px; flex: none; font-size: 17px; font-weight: bold; color: #0078d7; background: linear-gradient(#fff, #e1e9f3); border-bottom: 1px solid #b2cbe0; }
.prop-title svg { margin-bottom: 3px; }
.prop-body { flex: 1; min-height: 0; display: grid; grid-template: minmax(0, 1fr) 21px / minmax(0, 1fr) 21px; margin-left: 2px; }
.form { overflow: hidden; background: #fff; }
.rows { padding: 4px 12px 5px 21px; }
.main-rows { padding: 5px 6px 0 21px; --label: 235px; }
.agent-rows { --label: 157px; }
.adv-rows { --label: 167px; padding-bottom: 6px; }
.type-rows { --label: 174px; padding-top: 5px; }
.action-rows { --label: 140px; }
.row { display: flex; align-items: center; height: 34px; white-space: nowrap; }
.row > label:first-child, .caption { width: var(--label); flex: none; padding-bottom: 3px; }
.row.tall { height: 40px; }
.row.mid { height: 38px; }
.main-rows .tall > label:first-child, .main-rows .mid > label:first-child, .main-rows .location > label:first-child { padding-bottom: 6px; }
.strong { font-weight: bold; }
.eq { width: 14px; height: 12px; margin-right: 10px; }
.code { width: 9px; height: 11px; margin: 0 14px 12px 0; }
.name-row input[type="text"] { width: 150px; height: 26px; padding: 0 6px; border: 1px solid #e3e3e3; border-bottom: 1px solid #777; border-radius: 2px; }
.row.name-row > label:first-child { width: 222px; padding: 0; }
.check { display: flex; align-items: center; gap: 4px; }
.name-row .check { margin-left: 10px; }
.name-row .ignore { margin-left: 14px; }
input[type="checkbox"], input[type="radio"] { flex: none; appearance: none; width: 16px; height: 16px; border: 1px solid #5c5c5c; border-radius: 4px; background: #f3f3f3; }
input[type="radio"] { border-radius: 50%; }
input[type="radio"]:checked { background: #fff; border: 5px solid #005fb8; }
input[type="checkbox"]:checked { background: #005fb8; border-color: #005fb8; }
input[type="checkbox"]:checked::before { content: ""; display: block; width: 8px; height: 4px; margin: 4px 0 0 3px; border: solid #fff; border-width: 0 0 1px 1px; transform: rotate(-45deg); }
.row select { height: 25px; padding: 0 5px; appearance: none; border: 1px solid #a5a5ad; border-radius: 0; background: linear-gradient(#f0f0f0, #f0f0f0) right 1px center / 20px 21px no-repeat #fff; }
.w-type { width: 201px; }
.w-schedule { width: 181px; }
.w-location { width: 169px; }
.w-agent { width: 103px; }
.icon-select { position: relative; }
.icon-select svg { position: absolute; left: 4px; top: 5px; width: 15px; height: 15px; }
.row .icon-select select { display: block; width: 100%; padding-left: 23px; }
.mini { margin-left: 8px; }
.mini svg { display: block; }
.mini + .mini { margin-left: 10px; }
hr { height: 1px; margin: 5px 0 0 -10px; border: 0; background: #a0a0a0; }
.row.location { height: 51px; }
h3 { display: flex; align-items: center; gap: 6px; height: 30px; margin-right: 1px; padding: 0 0 2px 8px; font-size: 14px; font-weight: bold; color: #0078d7; background: linear-gradient(#e1e9f3, #fff); border-top: 1px solid #b2cbe0; border-radius: 3px 3px 0 0; }
h3 svg { width: 7px; height: 5px; fill: #0078d7; }
.row.radios { height: 58px; align-items: flex-start; padding-top: 5px; }
.radios .check { height: 25px; }
.radios .caption { line-height: 25px; }
.radios .eq { margin-top: 6px; }
textarea { flex: 1; height: 29px; resize: none; border: 1px solid #abb5c4; border-radius: 0; padding: 3px 16px; background: linear-gradient(#dcdcdc, #dcdcdc) 0 1px / 12px 25px no-repeat #fff; }
.action-rows { padding-right: 27px; }
.row.single { height: 30px; gap: 10px; }
.row.single label:first-child { width: auto; padding: 0; }
.row.library .caption { width: 222px; padding: 0; }
.library a { margin-left: 9px; color: #0066cc; text-decoration: none; }
.properties .vscroll { padding-top: 21px; padding-left: 8px; }
.properties .vscroll span { height: 596px; }
.arrows { display: flex; justify-content: space-between; align-items: center; padding: 0 8px 0 6px; }
.arrows svg { width: 7px; height: 9px; fill: #a0a0a0; }

/* status line */
.statusbar { display: flex; align-items: center; height: 26px; flex: none; padding-left: 3px; }
.status-text { width: 521px; }
.status-group { display: flex; align-items: center; gap: 6px; height: 22px; padding-left: 7px; border-left: 1px solid #a0a0a0; }
.view-tools { width: 63px; }
.shape-tools { width: 123px; gap: 7px; border-right: 1px solid #a0a0a0; }
.coords { width: 604px; height: 22px; margin-left: 247px; padding-left: 7px; border-left: 1px solid #a0a0a0; }

/* taskbar */
.taskbar { display: grid; grid-template-columns: 1fr auto 1fr; align-items: center; height: 60px; flex: none; background: linear-gradient(90deg, #daf0e2, #cdf1ee 25%, #c9f3f3); color: #111; }
.weather { display: flex; gap: 12px; padding-left: 27px; line-height: 20px; }
.weather svg { width: 26px; height: 30px; margin-top: 7px; }
.weather span { color: #555; }
.apps { display: flex; }
.apps button { position: relative; width: 47px; height: 48px; margin: 0 4px; border-radius: 4px; }
.apps svg { display: block; width: 30px; height: 30px; margin: 0 auto; }
.apps .current { background: #e8f9fa; border: 1px solid #d3eeee; }
.apps .current::after, .running::after { content: ""; position: absolute; bottom: 0; left: 13px; width: 20px; height: 4px; border-radius: 2px; background: #1f8494; }
.apps .running::after { left: 20px; width: 8px; background: #72888c; }
.dell { font: bold 9px "Open Sans", sans-serif; }
.qb { font: 17px "Open Sans", sans-serif; fill: #fff; }
.office { font: bold 12px "Open Sans", sans-serif; fill: #fff; }
.tray { display: flex; align-items: center; justify-content: flex-end; padding-right: 24px; }
.onedrive { width: 20px; margin-left: 13px; }
.lang { width: 40px; margin: 0 17px 0 13px; text-align: center; }
.wifi, .sound, .battery { width: 20px; height: 18px; margin-right: 10px; }
.clock { width: 87px; text-align: right; font-size: 15px; }
.badge { width: 20px; height: 20px; margin-left: 9px; border-radius: 50%; background: #1f8494; color: #fff; font-size: 12px; text-align: center; }
```
